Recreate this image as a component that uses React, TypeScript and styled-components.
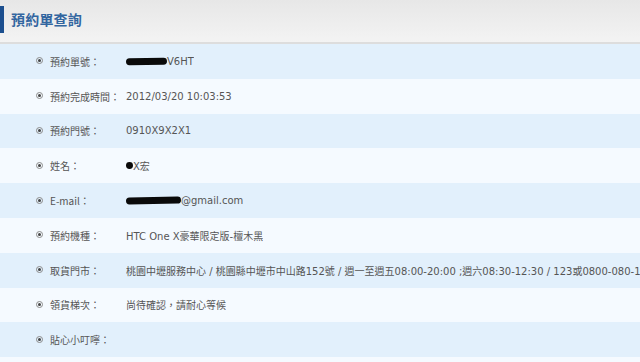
import React from "react";
import styled, { createGlobalStyle } from "styled-components";

const Global = createGlobalStyle`
  html, body { margin: 0; padding: 0; background: #ffffff; }
  body { width: 640px; height: 362px; overflow: hidden; }
`;

const Page = styled.div`
  width: 640px;
  height: 362px;
  overflow: hidden;
  font-family: "DejaVu Sans", "Noto Sans CJK TC", sans-serif;
  background: #f5faff;
`;

const Header = styled.div`
  height: 42px;
  display: flex;
  align-items: center;
  background: linear-gradient(#e7e7e7, #f3f3f3);
  border-bottom: 2px solid #dddddd;
`;

const Accent = styled.div`
  width: 4px;
  height: 27px;
  margin-top: -3px;
  background: #1c4f8f;
`;

const Title = styled.h1`
  margin: -4px 0 0 7px;
  font-family: "Noto Sans CJK TC", sans-serif;
  font-size: 14px;
  font-weight: 700;
  color: #3366a0;
  letter-spacing: 0.2px;
`;

const List = styled.div`
  display: flex;
  flex-direction: column;
`;

const Row = styled.div<{ $alt: boolean }>`
  height: 34.8px;
  display: flex;
  align-items: center;
  background: ${(p) => (p.$alt ? "#f5faff" : "#e2f0fc")};
  font-size: 10px;
  color: #555555;
  white-space: nowrap;
`;

const Bullet = styled.span`
  width: 7px;
  height: 7px;
  margin-left: 36px;
  margin-top: -1px;
  border-radius: 50%;
  border: 1px solid #8a8a8a;
  box-sizing: border-box;
  display: flex;
  align-items: center;
  justify-content: center;
  &::after {
    content: "";
    width: 3px;
    height: 3px;
    border-radius: 50%;
    background: #444;
  }
`;

const Label = styled.span`
  width: 76px;
  margin-left: 7px;
  font-family: "Noto Sans CJK TC", sans-serif;
  flex-shrink: 0;
`;

const Value = styled.span`
  display: flex;
  align-items: center;
  overflow: hidden;
  min-width: 0;
`;

const Blob = styled.span<{ $w: number }>`
  display: inline-block;
  flex-shrink: 0;
  width: ${(p) => p.$w}px;
  height: 7px;
  background: #0a0a0a;
  border-radius: 4px;
  transform: rotate(-1deg);
`;

const rows: { label: string; value: React.ReactNode }[] = [
  { label: "預約單號：", value: <><Blob $w={41} />V6HT</> },
  { label: "預約完成時間：", value: "2012/03/20 10:03:53" },
  { label: "預約門號：", value: "0910X9X2X1" },
  { label: "姓名：", value: <><Blob $w={7} />X宏</> },
  { label: "E-mail：", value: <><Blob $w={55} />@gmail.com</> },
  { label: "預約機種：", value: "HTC One X豪華限定版-檀木黑" },
  {
    label: "取貨門市：",
    value:
      "桃園中壢服務中心 / 桃園縣中壢市中山路152號 / 週一至週五08:00-20:00 ;週六08:30-12:30 / 123或0800-080-1",
  },
  { label: "領貨梯次：", value: "尚待確認，請耐心等候" },
  { label: "貼心小叮嚀：", value: "" },
];

export default function App() {
  return (
    <Page>
      <Global />
      <Header>
        <Accent />
        <Title>預約單查詢</Title>
      </Header>
      <List>
        {rows.map((r, i) => (
          <Row key={i} $alt={i % 2 === 1}>
            <Bullet />
            <Label>{r.label}</Label>
            <Value>{r.value}</Value>
          </Row>
        ))}
      </List>
    </Page>
  );
}
